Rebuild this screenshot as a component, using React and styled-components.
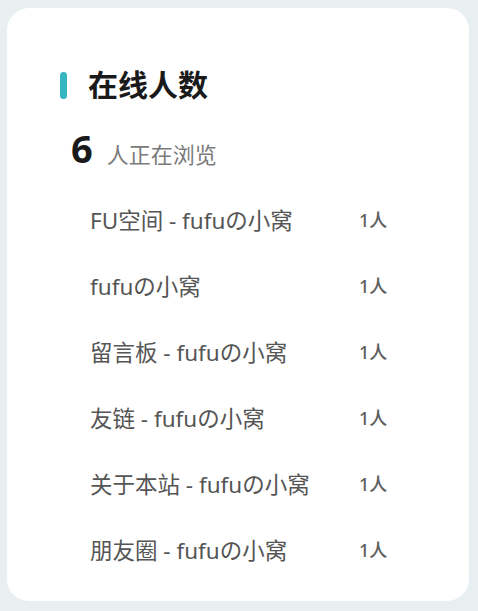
import React from "react";
import styled, { createGlobalStyle } from "styled-components";

const Global = createGlobalStyle`
  html, body {
    margin: 0;
    background: #e8eff1;
    font-family: "Noto Sans", "Noto Sans CJK SC", sans-serif;
  }
`;

const Page = styled.div`
  padding: 8px 9px 10px 7px;
`;

const Card = styled.div`
  background: #fff;
  border-radius: 22px;
  height: 593px;
  box-sizing: border-box;
  padding: 55px 20px 0 53px;
`;

const Title = styled.h2`
  display: flex;
  align-items: center;
  gap: 21px;
  margin: 0;
  font-size: 30px;
  font-weight: 700;
  color: #1a1a1a;
  height: 44px;
  line-height: 44px;
  &::before {
    content: "";
    width: 7px;
    height: 27px;
    border-radius: 4px;
    background: #35b5c0;
  }
`;

const Summary = styled.div`
  display: flex;
  align-items: baseline;
  gap: 14px;
  height: 52px;
  line-height: 52px;
  margin: 15px 0 0 11px;
`;

const Count = styled.span`
  font-size: 38px;
  font-weight: 700;
  color: #1a1a1a;
`;

const Label = styled.span`
  font-size: 22px;
  color: #7a7a7a;
`;

const List = styled.ul`
  list-style: none;
  margin: 12px 0 0;
  padding: 0 0 0 30px;
`;

const Row = styled.li`
  display: grid;
  grid-template-columns: 269px auto;
  align-items: center;
  height: 66px;
`;

const Name = styled.span`
  font-size: 22.5px;
  color: #555;
`;

const Num = styled.span`
  font-size: 18px;
  font-weight: 500;
  color: #5e5e5e;
`;

const pages = [
  "FU空间 - fufuの小窝",
  "fufuの小窝",
  "留言板 - fufuの小窝",
  "友链 - fufuの小窝",
  "关于本站 - fufuの小窝",
  "朋友圈 - fufuの小窝",
];

export default function App() {
  return (
    <Page>
      <Global />
      <Card>
        <Title>在线人数</Title>
        <Summary>
          <Count>6</Count>
          <Label>人正在浏览</Label>
        </Summary>
        <List>
          {pages.map((p) => (
            <Row key={p}>
              <Name>{p}</Name>
              <Num>1人</Num>
            </Row>
          ))}
        </List>
      </Card>
    </Page>
  );
}
